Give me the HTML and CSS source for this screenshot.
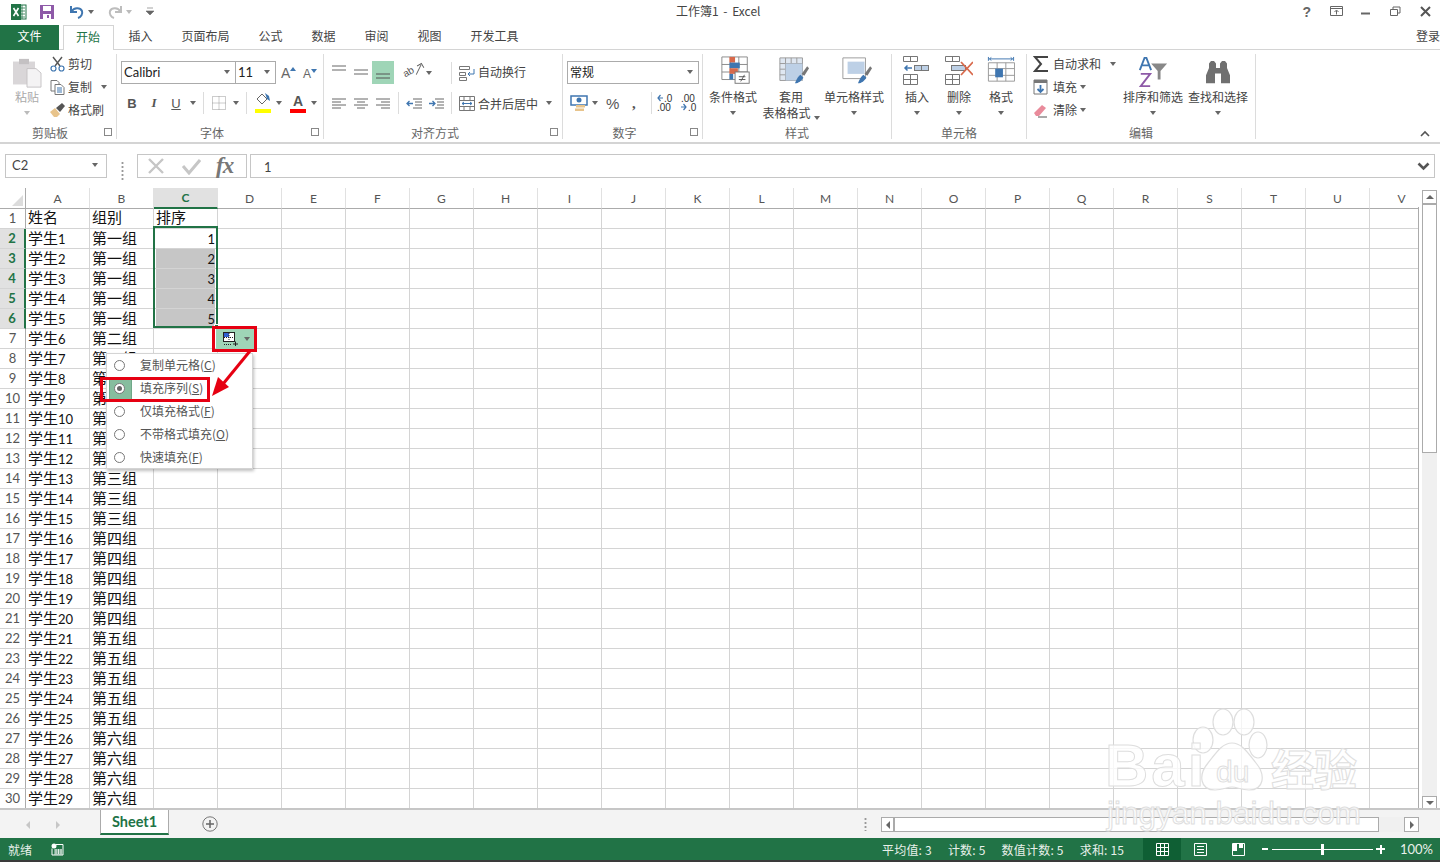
FILE: index.html
```html
<!DOCTYPE html>
<html lang="zh-CN">
<head>
    <meta charset="UTF-8">
    <title>工作簿1 - Excel</title>
    <link rel="stylesheet" href="styles.css">
</head>
<body>
<div class="app">
    <header class="titlebar">
        <div class="qat">
            <svg class="ico" width="20" height="18" viewBox="0 0 20 18"><rect x="8" y="2" width="9" height="14" fill="#fff" stroke="#217346"/><path d="M9 5h7M9 8h7M9 11h7M9 14h7M13 2v14" stroke="#217346" stroke-width=".8"/><rect x="2" y="1" width="10" height="16" fill="#217346"/><path d="M4.500 5l5 8M9.500 5l-5 8" stroke="#fff" stroke-width="1.600"/></svg>
            <svg class="ico save" width="16" height="16" viewBox="0 0 16 16"><path d="M1 1h14v14H1z" fill="#8e5aa8"/><rect x="4" y="2" width="8" height="5" fill="#fff"/><rect x="4" y="10" width="8" height="5" fill="#fff"/><rect x="8" y="11" width="2" height="3" fill="#8e5aa8"/></svg>
            <svg class="ico undo" width="16" height="16" viewBox="0 0 16 16"><path d="M2 2v6h6M2.500 7.500C5 3.500 11 3 13 7c1 3-1 6-4 7" fill="none" stroke="#3f76b0" stroke-width="2"/></svg>
            <i class="caret q"></i>
            <svg class="ico redo" width="16" height="16" viewBox="0 0 16 16"><path d="M14 2v6H8M13.500 7.500C11 3.500 5 3 3 7c-1 3 1 6 4 7" fill="none" stroke="#bdbdbd" stroke-width="2"/></svg>
            <i class="caret q light"></i>
            <svg class="ico custom" width="8" height="10" viewBox="0 0 8 10"><path d="M1 1h6M0 4h8l-4 4z" fill="#666" stroke="#666" stroke-width=".6"/></svg>
        </div>
        <div class="doc-title">工作簿1 - Excel</div>
        <div class="winbtns">
            <span class="help">?</span>
            <svg class="ribbon-opt" width="14" height="11" viewBox="0 0 14 11"><path d="M.5.500h12v9H.500zM.5 2.500h12M6.500 8.500V4.500M4.500 6l2-2 2 2" fill="none" stroke="#666"/></svg>
            <svg width="11" height="11" viewBox="0 0 11 11"><path d="M1 7.500h9" stroke="#666" stroke-width="2"/></svg>
            <svg width="11" height="11" viewBox="0 0 11 11"><path d="M3 3V1h7v6H8M.5 3.500h7v6h-7z" fill="none" stroke="#666"/></svg>
            <svg width="11" height="11" viewBox="0 0 11 11"><path d="M1 1l9 9M10 1l-9 9" stroke="#555" stroke-width="2"/></svg>
        </div>
    </header>

    <nav class="tabs">
        <a class="tab-file">文件</a>
        <a class="tab active">开始</a>
        <a class="tab">插入</a>
        <a class="tab">页面布局</a>
        <a class="tab">公式</a>
        <a class="tab">数据</a>
        <a class="tab">审阅</a>
        <a class="tab">视图</a>
        <a class="tab">开发工具</a>
        <span class="login">登录</span>
    </nav>

    <section class="ribbon">
        <div class="group g-clip">
            <div class="group-body">
                <div class="big paste">
                    <svg width="30" height="30" viewBox="0 0 30 34" preserveAspectRatio="none"><rect x="1" y="4" width="22" height="26" fill="#d9d6d8"/><rect x="7" y="1" width="10" height="6" fill="#c4c1c3"/><path d="M15 12h9l5 5v16H15z" fill="#f4f3f4" stroke="#c4c1c3"/></svg>
                    <span>粘贴</span>
                    <i class="caret light"></i>
                </div>
                <div class="stack">
                    <div class="item"><svg width="15" height="16" viewBox="0 0 15 16"><path d="M3 1l7 9M12 1l-7 9" stroke="#555" stroke-width="1.400"/><circle cx="3.500" cy="12.500" r="2.500" fill="none" stroke="#3f76b0" stroke-width="1.200"/><circle cx="11.500" cy="12.500" r="2.500" fill="none" stroke="#3f76b0" stroke-width="1.200"/></svg><span>剪切</span></div>
                    <div class="item"><svg width="15" height="15" viewBox="0 0 15 15"><path d="M1 .5h6l2 2V11H1z" fill="#fff" stroke="#777"/><path d="M5 4.500h6l3 3v7H5z" fill="#fff" stroke="#777"/><path d="M7 8h5M7 10h5M7 12h5" stroke="#3f76b0"/></svg><span>复制</span><i class="caret"></i></div>
                    <div class="item"><svg width="15" height="15" viewBox="0 0 15 15"><path d="M0 9l5-4 5 6-3 3H4z" fill="#e8c48c"/><path d="M6 5l6-5 3 3-5 6z" fill="#555"/></svg><span>格式刷</span></div>
                </div>
            </div>
            <div class="group-label with-launcher">剪贴板<i class="launcher"></i></div>
        </div>

        <div class="group g-font">
            <div class="group-body col">
                <div class="row r1">
                    <div class="combo font-name">Calibri<i class="caret"></i></div>
                    <div class="combo font-size">11<i class="caret"></i></div>
                    <span class="grow-a big-a">A<svg width="6" height="4" viewBox="0 0 6 4"><path d="M0 4l3-4 3 4z" fill="#3f76b0"/></svg></span>
                    <span class="grow-a small-a">A<svg width="6" height="4" viewBox="0 0 6 4"><path d="M0 0l3 4 3-4z" fill="#3f76b0"/></svg></span>
                </div>
                <div class="row r2">
                    <b class="fmt">B</b><em class="fmt it">I</em><u class="fmt">U</u><i class="caret"></i>
                    <i class="sep"></i>
                    <svg class="ml" width="14" height="14" viewBox="0 0 14 14"><path d="M.5.500h13v13H.500zM7 .5v13M.5 7h13" fill="none" stroke="#999" stroke-dasharray="1 1"/></svg><i class="caret"></i>
                    <i class="sep"></i>
                    <span class="color-btn"><svg width="16" height="12" viewBox="0 0 16 12"><path d="M2 6l5-5 5 5-5 5z" fill="#fff" stroke="#666"/><path d="M10 0l4 3 1 5-3-2z" fill="#3f76b0"/></svg><i class="yellow"></i></span><i class="caret"></i>
                    <span class="color-btn text-a">A<i class="red"></i></span><i class="caret"></i>
                </div>
            </div>
            <div class="group-label with-launcher">字体<i class="launcher"></i></div>
        </div>

        <div class="group g-align">
            <div class="group-body col">
                <div class="row r1">
                    <span class="al-btn"><svg width="14" height="7" viewBox="0 0 14 7"><path d="M0 1h14M0 5h14" stroke="#666"/></svg></span>
                    <span class="al-btn"><svg width="14" height="7" viewBox="0 0 14 7"><path d="M0 1h14M0 5h14" stroke="#666"/></svg></span>
                    <span class="al-btn on"><svg width="14" height="7" viewBox="0 0 14 7"><path d="M0 1h14M0 5h14" stroke="#555"/></svg></span>
                    <span class="orient">ab<svg width="12" height="9" viewBox="0 0 12 9"><path d="M1 8l9-6M6 1h5v5" fill="none" stroke="#666"/></svg></span><i class="caret"></i>
                    <i class="sep"></i>
                    <svg class="wrap-i" width="16" height="16" viewBox="0 0 16 16"><path d="M.5 1.500h10v3H.5zM.5 7.500h6v3h-6zM.5 12.500h7v3h-7z" fill="none" stroke="#777"/><path d="M15 4v5H9l2-2M9 9l2 2" fill="none" stroke="#3f76b0"/></svg><span class="al-text">自动换行</span>
                </div>
                <div class="row r2">
                    <span class="al-btn"><svg width="14" height="11" viewBox="0 0 14 11"><path d="M0 1h14M0 4h9M0 7h14M0 10h9" stroke="#666"/></svg></span>
                    <span class="al-btn"><svg width="14" height="11" viewBox="0 0 14 11"><path d="M0 1h14M3 4h8M0 7h14M3 10h8" stroke="#666"/></svg></span>
                    <span class="al-btn"><svg width="14" height="11" viewBox="0 0 14 11"><path d="M0 1h14M5 4h9M0 7h14M5 10h9" stroke="#666"/></svg></span>
                    <i class="sep s1"></i>
                    <span class="al-btn"><svg width="16" height="11" viewBox="0 0 16 11"><path d="M7 1h9M9 4h7M9 7h7M7 10h9" stroke="#666"/><path d="M7 5.500H1M3.500 3L1 5.500 3.500 8" fill="none" stroke="#3f76b0" stroke-width="1.300"/></svg></span>
                    <span class="al-btn"><svg width="16" height="11" viewBox="0 0 16 11"><path d="M7 1h9M9 4h7M9 7h7M7 10h9" stroke="#666"/><path d="M1 5.500h6M4.500 3L7 5.500 4.500 8" fill="none" stroke="#3f76b0" stroke-width="1.300"/></svg></span>
                    <i class="sep s2"></i>
                    <svg class="merge-i" width="16" height="15" viewBox="0 0 16 15"><path d="M.5.500h15v14H.500zM.5 4.500h15M.5 10.500h15M5 .5v4M11 .5v4M5 10.500v4M11 10.500v4" fill="none" stroke="#777"/><path d="M3 7.500h10M5 6L3 7.500 5 9M11 6l2 1.500L11 9" fill="none" stroke="#3f76b0"/></svg><span class="al-text">合并后居中</span><i class="caret"></i>
                </div>
            </div>
            <div class="group-label with-launcher">对齐方式<i class="launcher"></i></div>
        </div>

        <div class="group g-num">
            <div class="group-body col">
                <div class="row r1"><div class="combo num-fmt">常规<i class="caret"></i></div></div>
                <div class="row r2">
                    <svg class="cur" width="18" height="17" viewBox="0 0 18 17"><rect x="1" y="1" width="16" height="9" fill="#fff" stroke="#3f76b0" stroke-width="1.500"/><circle cx="9" cy="5" r="2.500" fill="#3f76b0"/><rect x="6" y="10" width="9" height="2.500" fill="#e8c48c"/><rect x="5" y="13.500" width="9" height="2.500" fill="#e8c48c"/></svg><i class="caret"></i>
                    <span class="pct">%</span><span class="comma">,</span>
                    <i class="sep"></i>
                    <span class="dec"><svg width="6" height="8" viewBox="0 0 6 8"><path d="M6 4H1M3.500 1L1 4l2.500 3" fill="none" stroke="#3f76b0" stroke-width="1.200"/></svg>.0<br>.00</span>
                    <span class="dec d2">.00<br><svg width="6" height="8" viewBox="0 0 6 8"><path d="M0 4h5M2.500 1L5 4 2.500 7" fill="none" stroke="#3f76b0" stroke-width="1.200"/></svg>.0</span>
                </div>
            </div>
            <div class="group-label with-launcher">数字<i class="launcher"></i></div>
        </div>

        <div class="group g-style">
            <div class="group-body">
                <div class="big b-cond">
                    <svg width="32" height="32" viewBox="0 0 32 34"><path d="M1 1h27v24H1zM10 1v24M19 1v24M1 9h27M1 17h27" fill="#fff" stroke="#888"/><rect x="9" y="1" width="6" height="6" fill="#d8694b"/><rect x="9" y="7" width="11" height="6" fill="#3f76b0"/><rect x="9" y="13" width="9" height="6" fill="#d8694b"/><rect x="9" y="19" width="4" height="6" fill="#3f76b0"/><rect x="15" y="17" width="15" height="12" fill="#fff" stroke="#777"/><path d="M19 22h7M19 25h7M25 20l-4 7" stroke="#555"/></svg>
                    <span>条件格式</span>
                    <i class="caret"></i>
                </div>
                <div class="big b-table">
                    <svg width="32" height="32" viewBox="0 0 32 34"><path d="M1 2h24v24H1zM7 2v24M13 2v24M19 2v24M1 8h24M1 14h24M1 20h24" fill="#dfe7f1" stroke="#999"/><path d="M7 8h18v18H7z" fill="#bdd0e6"/><path d="M17 29c2-5 4-8 6-9l3 3c-2 3-5 6-9 6z" fill="#3f76b0"/><path d="M24 19l6-8 2 2-5 8z" fill="#777"/></svg>
                    <span class="two">套用<br>表格格式<i class="caret inline"></i></span>
                </div>
                <div class="big b-cell">
                    <svg width="32" height="32" viewBox="0 0 32 34"><path d="M1 2h24v22H1z" fill="#fff" stroke="#999"/><rect x="6" y="6" width="18" height="13" fill="#bdd0e6"/><path d="M17 29c2-5 4-8 6-9l3 3c-2 3-5 6-9 6z" fill="#3f76b0"/><path d="M24 19l6-8 2 2-5 8z" fill="#777"/></svg>
                    <span>单元格样式</span>
                    <i class="caret"></i>
                </div>
            </div>
            <div class="group-label">样式</div>
        </div>

        <div class="group g-cells">
            <div class="group-body">
                <div class="big b-c">
                    <svg width="28" height="30" viewBox="0 0 28 30"><path d="M.5.500h14v5H.500zM7.500.5v5M.5 18.500h14v10H.500zM7.500 18.500v10M.5 23.500h14" fill="none" stroke="#777"/><rect x="11.500" y="9.500" width="14" height="5" fill="#bdd0e6" stroke="#777"/><path d="M18.500 9.500v5" stroke="#777"/><path d="M9 12H2M4.500 9.500L2 12l2.500 2.500" fill="none" stroke="#3f76b0" stroke-width="1.500"/></svg>
                    <span>插入</span>
                    <i class="caret"></i>
                </div>
                <div class="big b-c">
                    <svg width="28" height="30" viewBox="0 0 28 30"><path d="M.5.500h14v5H.500zM7.500.5v5M.5 18.500h14v10H.500zM7.500 18.500v10M.5 23.500h14" fill="none" stroke="#777"/><rect x="6.500" y="9.500" width="14" height="5" fill="#bdd0e6" stroke="#777"/><path d="M16 6l12 13M28 6L16 19" stroke="#d8694b" stroke-width="1.800"/></svg>
                    <span>删除</span>
                    <i class="caret"></i>
                </div>
                <div class="big b-c">
                    <svg width="28" height="31" viewBox="0 0 28 31"><path d="M1 1v4M27 1v4M2 3h24M2 3l2-1.500M2 3l2 1.500M26 3l-2-1.500M26 3l-2 1.500" fill="none" stroke="#3f76b0"/><path d="M1 7h27v19H1zM10 7v19M19 7v19M1 13h27M1 20h27" fill="#fff" stroke="#999"/><rect x="8" y="13" width="8" height="9" fill="#3f76b0"/></svg>
                    <span>格式</span>
                    <i class="caret"></i>
                </div>
            </div>
            <div class="group-label">单元格</div>
        </div>

        <div class="group g-edit">
            <div class="group-body">
                <div class="stack edit">
                    <div class="item"><svg width="15" height="16" viewBox="0 0 15 16"><path d="M15 1H2l6 7-6 7h13" fill="none" stroke="#444" stroke-width="2"/></svg><span>自动求和</span><i class="caret"></i></div>
                    <div class="item near"><svg width="15" height="16" viewBox="0 0 15 16"><path d="M1 1h13v14H1z" fill="#fff" stroke="#777"/><path d="M1 1h13v3H1z" fill="#777"/><path d="M7.500 6v7M4.500 10l3 3 3-3" fill="none" stroke="#3f76b0" stroke-width="1.800"/></svg><span>填充</span><i class="caret"></i></div>
                    <div class="item near"><svg width="15" height="15" viewBox="0 0 15 15"><path d="M1 10l8-8 4 3-7 8H3z" fill="#e98b9b"/><path d="M5 14h9" stroke="#555"/></svg><span>清除</span><i class="caret"></i></div>
                </div>
                <div class="big b-sort">
                    <svg width="30" height="32" viewBox="0 0 30 34"><path d="M1 15L6 2h2l5 13M3.500 10h7" fill="none" stroke="#3f76b0" stroke-width="2"/><path d="M2 19h10L2 32h10" fill="none" stroke="#8e5aa8" stroke-width="2"/><path d="M13 8h17l-7 8v9h-3v-9z" fill="#888"/></svg>
                    <span>排序和筛选</span>
                    <i class="caret"></i>
                </div>
                <div class="big b-find">
                    <svg width="26" height="25" viewBox="0 0 26 28" preserveAspectRatio="none"><path d="M1 26v-9l3-8V4l2-3h3l2 3v5h4V4l2-3h3l2 3v5l3 8v9h-9V15h-6v11z" fill="#707070"/></svg>
                    <span>查找和选择</span>
                    <i class="caret"></i>
                </div>
            </div>
            <div class="group-label">编辑</div>
        </div>

        <svg class="collapse" width="10" height="7" viewBox="0 0 10 7"><path d="M1 6l4-4 4 4" fill="none" stroke="#555" stroke-width="1.600"/></svg>
    </section>

    <section class="formula-bar">
        <div class="name-box">C2<i class="caret"></i></div>
        <div class="grip"></div>
        <div class="fx-box">
            <svg width="20" height="18" viewBox="0 0 20 18"><path d="M3 2l14 14M17 2L3 16" stroke="#c6c6c6" stroke-width="2.400"/></svg>
            <svg width="20" height="18" viewBox="0 0 20 18"><path d="M2 9l6 7L19 3" fill="none" stroke="#c6c6c6" stroke-width="3"/></svg>
            <span class="fx">fx</span>
        </div>
        <div class="formula-input"><span>1</span><svg width="13" height="9" viewBox="0 0 13 9"><path d="M1.500 1.500L6.500 6.500l5-5" fill="none" stroke="#555" stroke-width="2.600"/></svg></div>
    </section>

    <main class="sheet">
        <div class="grid-clip"><table class="grid" id="grid"></table></div>

        <div class="range"><i class="handle"></i></div>

        <div class="fill-btn">
            <svg width="16" height="14" viewBox="0 0 16 14"><rect x=".5" y=".5" width="11" height="9" fill="#fff" stroke="#222"/><rect x="1" y="1" width="5" height="4" fill="#2f5fd0"/><path d="M1 12.500h7M1 5.500h10M6 1v8" stroke="#222" stroke-dasharray="1 1"/><path d="M10 12h5M12.500 9.500v5" stroke="#222"/></svg>
            <i class="caret"></i>
        </div>
        <ul class="fill-menu">
            <li><i class="radio"></i>复制单元格(<u>C</u>)</li>
            <li class="picked"><i class="radio"></i>填充序列(<u>S</u>)</li>
            <li><i class="radio"></i>仅填充格式(<u>F</u>)</li>
            <li><i class="radio"></i>不带格式填充(<u>O</u>)</li>
            <li><i class="radio"></i>快速填充(<u>F</u>)</li>
        </ul>
        <div class="mark mark-btn"></div>
        <div class="mark mark-item"></div>
        <svg class="arrow" width="44" height="50" viewBox="0 0 44 50"><path d="M39 1L12 34" stroke="#e60012" stroke-width="3"/><path d="M1 46l6-19 11 10z" fill="#e60012"/></svg>

        <div class="vscroll">
            <span class="sb-btn"><i class="tri up"></i></span>
            <span class="sb-thumb"></span>
            <span class="sb-fill"></span>
            <span class="sb-btn"><i class="tri down"></i></span>
        </div>
    </main>

    <section class="sheet-tabs">
        <i class="nav-tri left"></i><i class="nav-tri right"></i>
        <span class="sheet-tab">Sheet1</span>
        <svg class="add-sheet" width="16" height="16" viewBox="0 0 16 16"><circle cx="8" cy="8" r="7.200" fill="none" stroke="#777"/><path d="M8 4v8M4 8h8" stroke="#666" stroke-width="1.500"/></svg>
        <span class="tab-grip"></span>
        <div class="hscroll">
            <span class="sb-btn"><i class="tri left"></i></span>
            <span class="sb-thumb"></span>
            <span class="sb-fill"></span>
            <span class="sb-btn"><i class="tri right"></i></span>
        </div>
    </section>

    <footer class="statusbar">
        <span class="ready">就绪</span>
        <svg class="macro" width="13" height="13" viewBox="0 0 13 13"><circle cx="3" cy="3" r="2.500" fill="#fff"/><path d="M5 1.500h7V12H1V5.500" fill="none" stroke="#fff"/><path d="M3 7h8M3 9h8M3 11h8M5 6v5M7.500 6v5M10 6v5" stroke="#fff" stroke-width=".8"/></svg>
        <div class="stats">
            <span>平均值: 3</span><span>计数: 5</span><span>数值计数: 5</span><span>求和: 15</span>
        </div>
        <div class="views">
            <span class="view on"><svg width="13" height="13" viewBox="0 0 13 13"><path d="M.5.500h12v12H.500zM4.500.5v12M8.500.5v12M.5 4.500h12M.5 8.500h12" fill="none" stroke="#fff"/></svg></span>
            <span class="view"><svg width="13" height="13" viewBox="0 0 13 13"><path d="M.5.500h12v12H.500zM3 3.500h7M3 6.500h7M3 9.500h7" fill="none" stroke="#fff"/></svg></span>
            <span class="view"><svg width="13" height="13" viewBox="0 0 13 13"><path d="M.5.500h12v12H.500z" fill="none" stroke="#fff"/><path d="M1 1h4v7H1zM7 1h4v4H7z" fill="#fff"/></svg></span>
        </div>
        <div class="zoom">
            <i class="minus"></i>
            <div class="slider"><i class="knob"></i></div>
            <i class="plus"></i>
            <span class="pct-zoom">100%</span>
        </div>
    </footer>

    <div class="watermark">
        <svg width="80" height="86" viewBox="0 0 80 86"><g fill="rgba(255,255,255,.75)" stroke="#dedede" stroke-width="1.200"><ellipse cx="11" cy="34" rx="10" ry="13"/><ellipse cx="31" cy="16" rx="10" ry="13"/><ellipse cx="52" cy="16" rx="10" ry="13"/><ellipse cx="66" cy="39" rx="9" ry="13"/><path d="M40 37c10 0 16 10 24 20 10 12 8 27-7 27-8 0-12-3-17-3s-9 3-17 3c-15 0-17-15-7-27 8-10 14-20 24-20z"/></g></svg>
        <span class="wm-bai">Bai</span>
        <span class="wm-du">du</span>
        <span class="wm-cn">经验</span>
        <span class="wm-url">jingyan.baidu.com</span>
    </div>
</div>
<script src="script.js"></script>
</body>
</html>
```

FILE: styles.css
```css
* {
    box-sizing: border-box;
}
html, body {
    margin: 0;
    height: 100%;
    overflow: hidden;
}
body {
    font-family: "Noto Sans CJK SC", "Liberation Sans", sans-serif;
    font-size: 12px;
    color: #444;
    background: #fff;
}
i, em {
    font-style: normal;
}
svg {
    display: block;
    flex: none;
}
.app {
    position: relative;
    width: 1440px;
    height: 862px;
    border-bottom: 2px solid #3a3a3a;
    overflow: hidden;
}
.caret {
    display: block;
    flex: none;
    width: 0;
    height: 0;
    border-left: 3.500px solid transparent;
    border-right: 3.500px solid transparent;
    border-top: 4px solid #666;
}
.caret.light {
    border-top-color: #bbb;
}

/* title bar */
.titlebar {
    height: 25px;
    display: flex;
    align-items: center;
    position: relative;
}
.qat {
    display: flex;
    align-items: center;
    padding-left: 9px;
    padding-bottom: 2px;
}
.save { margin-left: 10px; }
.undo { margin-left: 14px; }
.caret.q { margin-left: 3px; }
.redo { margin-left: 13px; }
.caret.q.light { margin-left: 3px; }
.custom { margin-left: 14px; }
.doc-title {
    position: absolute;
    left: 676px;
    top: 2px;
    line-height: 18px;
    color: #444;
    word-spacing: 2px;
}
.winbtns {
    margin-left: auto;
    display: flex;
    align-items: center;
    gap: 19px;
    padding-right: 9px;
    padding-bottom: 2px;
}
.help {
    font: bold 14px "Liberation Sans", sans-serif;
    color: #666;
}
.ribbon-opt {
    margin-right: -3px;
}

/* tabs */
.tabs {
    height: 25px;
    display: flex;
    border-bottom: 1px solid #d4d4d4;
    line-height: 21px;
    position: relative;
}
.tab-file {
    width: 59px;
    height: 25px;
    background: #217346;
    color: #fff;
    text-align: center;
    margin-right: 4px;
}
.tab {
    padding: 0 14.500px;
    color: #444;
    white-space: nowrap;
}
.tab.active {
    height: 25px;
    width: 51px;
    padding: 0 12px;
    color: #217346;
    background: #fff;
    border: 1px solid #d4d4d4;
    border-bottom: none;
}
.login {
    position: absolute;
    left: 1416px;
    top: 0;
    white-space: nowrap;
}

/* ribbon */
.ribbon {
    height: 94px;
    display: flex;
    border-bottom: 2px solid #d4d4d4;
    padding-top: 4px;
    position: relative;
}
.group {
    display: flex;
    flex-direction: column;
    height: 85px;
    border-right: 1px solid #dcdcdc;
    position: relative;
}
.group-body {
    flex: none;
    height: 70px;
    display: flex;
}
.group-body.col {
    flex-direction: column;
}
.group-label {
    height: 18px;
    line-height: 18px;
    text-align: center;
    color: #666;
}
.group-label.with-launcher {
    padding-right: 16px;
}
.launcher {
    position: absolute;
    right: 4px;
    bottom: 3px;
    width: 8px;
    height: 8px;
    border-left: 1px solid #888;
    border-top: 1px solid #888;
    box-shadow: inset -2px -2px 0 -1px #888;
}
.g-clip { width: 117px; }
.g-font { width: 207px; }
.g-align { width: 239px; }
.g-num { width: 140px; }
.g-style { width: 189px; }
.g-cells { width: 135px; }
.g-edit { width: 229px; }

.big {
    display: flex;
    flex-direction: column;
    align-items: center;
    flex: none;
    line-height: 16px;
    padding-top: 2px;
}
.big span {
    margin-top: 1px;
    white-space: nowrap;
    height: 16px;
}
.big .caret {
    margin-top: 6px;
}
.paste {
    width: 30px;
    margin-left: 12px;
    color: #aaa;
    padding-top: 4px;
}
.stack {
    display: flex;
    flex-direction: column;
    gap: 7px;
    margin-left: 8px;
    padding-top: 2px;
}
.item {
    display: flex;
    align-items: center;
    height: 16px;
    line-height: 16px;
    white-space: nowrap;
}
.item span {
    margin-left: 3px;
}
.item .caret {
    margin-left: 9px;
}

.row {
    display: flex;
    align-items: center;
}
.r1 {
    height: 23px;
    margin-top: 7px;
}
.r2 {
    height: 22px;
    margin-top: 8px;
}
.combo {
    height: 23px;
    border: 1px solid #ababab;
    background: #fff;
    display: flex;
    align-items: center;
    justify-content: space-between;
    padding: 0 5px 2px 2px;
    font-family: Lato, "Noto Sans CJK SC", sans-serif;
    font-size: 13px;
    color: #222;
}
.g-font .r1 {
    padding-left: 4px;
}
.font-name { width: 115px; }
.font-size { width: 41px; margin-left: -1px; }
.grow-a {
    display: flex;
    font-family: "Liberation Sans", sans-serif;
    color: #666;
}
.big-a {
    font-size: 14px;
    margin-left: 5px;
    width: 22px;
}
.small-a {
    font-size: 12px;
    padding-top: 2px;
    width: 14px;
}
.grow-a svg {
    margin-top: 2px;
}
.g-font .r2 {
    padding-left: 4px;
}
.fmt {
    font-family: "Liberation Sans", sans-serif;
    font-size: 13px;
    color: #555;
    width: 22px;
    text-align: center;
}
.fmt.it {
    font-style: italic;
    font-family: "Liberation Serif", serif;
    font-weight: bold;
}
.fmt + .caret {
    margin-left: 3px;
}
.sep {
    display: block;
    flex: none;
    width: 1px;
    height: 22px;
    background: #dcdcdc;
    margin: 0 7px;
}
.ml {
    margin-left: 1px;
    margin-right: 7px;
}
.color-btn {
    width: 16px;
    margin: 0 5px 0 1px;
    display: block;
    position: relative;
    height: 20px;
}
.color-btn .yellow, .color-btn .red {
    position: absolute;
    left: 0;
    bottom: 0;
    width: 16px;
    height: 4px;
    background: #ffff00;
}
.color-btn .red {
    background: #f00;
}
.text-a {
    font: bold 14px/16px "Liberation Sans", sans-serif;
    color: #555;
    text-align: center;
    margin-left: 8px;
}
.g-font .r2 > .caret:last-child {
    margin-left: 0;
}
.al-btn {
    flex: none;
    width: 22px;
    height: 23px;
    display: flex;
    align-items: flex-start;
    justify-content: center;
    padding-top: 4px;
}
.r1 .al-btn:nth-child(2) {
    padding-top: 8px;
}
.al-btn.on {
    background: #9fd5b7;
    padding-top: 12px;
}
.r2 .al-btn {
    align-items: center;
    padding-top: 0;
}
.g-align .r1, .g-align .r2 {
    padding-left: 4px;
}
.orient {
    display: flex;
    align-items: flex-start;
    width: 18px;
    height: 16px;
    margin-left: 10px;
    margin-right: 4px;
    font: 10px/10px "Liberation Sans", sans-serif;
    color: #555;
    transform: rotate(-30deg);
}
.orient svg {
    margin: 3px 0 0 -1px;
}
.g-align .r1 .sep {
    margin: 0 7px 0 19px;
}
.s1 {
    margin: 0 4px 0 4px;
}
.g-align .s2 {
    margin: 0 7px 0 4px;
}
.merge-i {
    margin-right: 3px;
}
.wrap-i {
    margin-right: 3px;
}
.al-text {
    white-space: nowrap;
}
.r1 .al-text {
    padding-bottom: 2px;
}
.g-align .r2 .caret {
    margin-left: 8px;
}
.num-fmt {
    width: 132px;
    margin-left: 4px;
    font-family: "Noto Sans CJK SC", sans-serif;
    font-size: 12px;
}
.cur {
    margin-left: 7px;
    margin-right: 4px;
}
.pct {
    margin-left: 8px;
    font-size: 15px;
    width: 14px;
    color: #555;
    font-family: "Liberation Sans", sans-serif;
}
.comma {
    margin-left: 12px;
    font: bold 15px/12px "Liberation Serif", serif;
    color: #555;
    width: 5px;
}
.g-num .sep {
    margin: 0 5px 0 14px;
}
.dec {
    font: 10px/9px "Liberation Sans", sans-serif;
    color: #333;
    width: 20px;
    white-space: nowrap;
}
.dec svg {
    display: inline-block;
    margin-right: 1px;
}
.d2 {
    margin-left: 4px;
}
.b-cond svg, .b-table svg, .b-cell svg {
    margin-left: 5px;
}
.b-cond { width: 60px; }
.b-table { width: 68px; margin-left: -6px; }
.b-table span.two {
    text-align: center;
    line-height: 16px;
    height: 32px;
}
.caret.inline {
    display: inline-block;
    margin-left: 3px;
    vertical-align: middle;
}
.b-cell { width: 60px; margin-left: -1px; }
.b-c { width: 42px; }
.b-c svg { height: 30px; margin-bottom: 2px; }
.g-cells .group-body { padding-left: 4px; }
.g-edit .stack.edit {
    width: 90px;
    margin-left: 6px;
}
.edit .item span {
    margin-left: 5px;
}
.item.near .caret {
    margin-left: 3px;
}
.b-sort { width: 60px; }
.b-find { width: 62px; margin-left: 4px; }
.b-find svg { margin: 4px 0 3px; }
.collapse {
    position: absolute;
    right: 10px;
    bottom: 5px;
}

/* formula bar */
.formula-bar {
    height: 44px;
    display: flex;
    padding-top: 10px;
    background: #fff;
}
.name-box {
    width: 102px;
    height: 24px;
    margin-left: 5px;
    border: 1px solid #c6c6c6;
    padding: 0 8px 2px 6px;
    display: flex;
    align-items: center;
    justify-content: space-between;
    font-family: Lato, sans-serif;
    font-size: 13px;
}
.grip {
    width: 30px;
    margin: 7px 0;
    background: radial-gradient(circle, #999 1px, transparent 1.200px) center top / 3px 4px repeat-y;
}
.fx-box {
    width: 110px;
    height: 24px;
    border: 1px solid #c6c6c6;
    display: flex;
    align-items: center;
    gap: 15px;
    padding-left: 8px;
}
.fx {
    font: italic bold 23px/20px "Liberation Serif", serif;
    color: #777;
    letter-spacing: -1px;
    margin-left: 0;
}
.formula-input {
    flex: 1;
    height: 24px;
    margin-left: 3px;
    margin-right: 5px;
    border: 1px solid #c6c6c6;
    display: flex;
    align-items: center;
    justify-content: space-between;
    padding: 0 4px 0 13px;
    font-family: Lato, sans-serif;
    font-size: 13px;
}
.formula-input span {
    padding-top: 2px;
}

/* sheet */
.sheet {
    position: relative;
    height: 622px;
    border-bottom: 2px solid #c6c6c6;
    overflow: hidden;
}
.sheet::after {
    content: "";
    position: absolute;
    left: 1418px;
    top: 19px;
    bottom: 0;
    width: 1px;
    background: #ababab;
}
.grid-clip {
    width: 1418px;
    height: 620px;
    overflow: hidden;
}
.grid {
    border-collapse: separate;
    border-spacing: 0;
    table-layout: fixed;
    width: 1434px;
    font-family: Lato, "Noto Sans CJK SC", sans-serif;
    font-size: 15px;
    color: #111;
    background: #fff;
}
.grid td, .grid th {
    padding: 0;
    height: 20px;
    border-right: 1px solid #d4d4d4;
    border-bottom: 1px solid #d4d4d4;
    overflow: hidden;
    white-space: nowrap;
    font-weight: normal;
}
.grid td {
    padding: 1px 2px 1px;
    line-height: 17px;
}
.grid .n {
    font-size: 13px;
    line-height: 0;
}
.grid tbody tr:first-child td {
    padding-top: 0;
    padding-bottom: 2px;
}
.grid col.head { width: 26px; }
.grid col.c { width: 64px; }
.grid thead th {
    height: 20px;
    font-size: 12px;
    color: #555;
    background: #fff;
    border-bottom: 1px solid #ababab;
    border-right: 1px solid #e1e1e1;
    line-height: 19px;
}
.grid tbody th {
    font-size: 13px;
    line-height: 17px;
    padding: 1px 0;
    color: #555;
    background: #fff;
    border-right: 1px solid #ababab;
    text-align: center;
}
.grid thead th.corner {
    position: relative;
    border-right: 1px solid #ababab;
}
.grid thead th.corner::after {
    content: "";
    position: absolute;
    right: 2px;
    bottom: 2px;
    border-left: 11px solid transparent;
    border-bottom: 11px solid #dcdcdc;
}
.grid thead th.sel {
    background: #e1e1e1;
    color: #217346;
    font-weight: bold;
    border-bottom: 2px solid #217346;
}
.grid tbody th.sel {
    background: #e1e1e1;
    color: #217346;
    font-weight: bold;
    border-right: 2px solid #217346;
}
.grid td.num {
    text-align: right;
    padding-right: 2px;
}
.grid td.shade {
    background: #c6c6c6;
    border-bottom-color: #d4d4d4;
    box-shadow: inset 2px 0 0 #fff, inset -2px 0 0 #fff;
}
.range {
    position: absolute;
    left: 153px;
    top: 38px;
    width: 65px;
    height: 102px;
    border: 2px solid #217346;
    pointer-events: none;
}
.handle {
    position: absolute;
    right: -3px;
    bottom: -3px;
    width: 5px;
    height: 5px;
    background: #217346;
    border: 1px solid #fff;
}
.fill-btn {
    position: absolute;
    left: 216px;
    top: 141px;
    width: 38px;
    height: 20px;
    background: #9fd5b7;
    display: flex;
    align-items: center;
    gap: 5px;
    padding-left: 7px;
}
.fill-menu {
    position: absolute;
    left: 106px;
    top: 165px;
    width: 147px;
    height: 116px;
    margin: 0;
    padding: 0;
    list-style: none;
    background: #fff;
    border: 1px solid #d4d4d4;
    box-shadow: 1px 2px 3px rgba(0, 0, 0, .25);
}
.fill-menu li {
    height: 23px;
    line-height: 21px;
    display: flex;
    align-items: center;
    padding: 0 0 2px 33px;
    position: relative;
    white-space: pre;
    color: #555;
}
.fill-menu li u {
    text-underline-offset: 1px;
}
.radio {
    position: absolute;
    left: 7px;
    top: 6px;
    width: 11px;
    height: 11px;
    border-radius: 50%;
    border: 1px solid #777;
    background: #fff;
}
.picked::before {
    content: "";
    position: absolute;
    left: 2px;
    top: 1px;
    width: 21px;
    height: 21px;
    background: #86bd9e;
    border: 1px solid #6fa888;
}
.picked .radio::after {
    content: "";
    position: absolute;
    left: 2px;
    top: 2px;
    width: 5px;
    height: 5px;
    border-radius: 50%;
    background: #666;
}
.mark {
    position: absolute;
    border: 3px solid #e60012;
    pointer-events: none;
}
.mark-btn {
    left: 212px;
    top: 138px;
    width: 45px;
    height: 26px;
}
.mark-item {
    left: 100px;
    top: 189px;
    width: 110px;
    height: 25px;
}
.arrow {
    position: absolute;
    left: 211px;
    top: 162px;
}

/* scrollbars */
.sb-btn {
    flex: none;
    background: #fff;
    border: 1px solid #ababab;
    display: flex;
    align-items: center;
    justify-content: center;
}
.sb-thumb {
    flex: none;
    background: #fff;
    border: 1px solid #ababab;
}
.sb-fill {
    flex: 1;
    background: #f0f0f0;
}
.tri {
    width: 0;
    height: 0;
    display: block;
    border: 4px solid transparent;
}
.tri.up { border-bottom-color: #666; border-top-width: 0; }
.tri.down { border-top-color: #666; border-bottom-width: 0; }
.tri.left { border-right-color: #666; border-left-width: 0; }
.tri.right { border-left-color: #666; border-right-width: 0; }
.vscroll {
    position: absolute;
    left: 1422px;
    top: 2px;
    width: 15px;
    height: 620px;
    display: flex;
    flex-direction: column;
}
.vscroll .sb-btn { height: 14px; }
.vscroll .sb-thumb { height: 249px; }

/* sheet tabs */
.sheet-tabs {
    height: 28px;
    background: #f3f3f3;
    display: flex;
    align-items: center;
    position: relative;
}
.nav-tri {
    display: block;
    position: absolute;
    top: 11px;
    width: 0;
    height: 0;
    border: 4px solid transparent;
}
.nav-tri.left { left: 26px; border-right-color: #c6c6c6; border-left-width: 0; }
.nav-tri.right { left: 56px; border-left-color: #c6c6c6; border-right-width: 0; }
.sheet-tab {
    margin-left: 100px;
    width: 69px;
    height: 25px;
    background: #fff;
    border: 1px solid #ababab;
    border-top: none;
    border-bottom: 2px solid #217346;
    color: #217346;
    font: bold 14.500px/23px Lato, sans-serif;
    text-align: center;
    align-self: flex-start;
}
.add-sheet {
    margin-left: 33px;
}
.tab-grip {
    width: 4px;
    height: 14px;
    margin-left: 645px;
    background: radial-gradient(circle, #999 1px, transparent 1.200px) center top / 3px 4px repeat-y;
}
.hscroll {
    position: absolute;
    left: 881px;
    top: 7px;
    width: 538px;
    height: 15px;
    display: flex;
}
.hscroll .sb-btn { width: 13px; }
.hscroll .sb-thumb { width: 485px; }
.hscroll .sb-btn:last-child { width: 15px; }

/* status bar */
.statusbar {
    height: 22px;
    background: #217346;
    color: #e8f0ea;
    display: flex;
    align-items: center;
    position: relative;
}
.ready {
    margin-left: 8px;
}
.macro {
    margin-left: 19px;
}
.stats {
    margin-left: 818px;
    display: flex;
    gap: 16px;
    white-space: nowrap;
    letter-spacing: .2px;
}
.views {
    position: absolute;
    left: 1143px;
    top: 0;
    height: 22px;
    display: flex;
}
.view {
    width: 38px;
    height: 22px;
    display: flex;
    align-items: center;
    justify-content: center;
}
.view.on {
    background: #0f5f34;
}
.zoom {
    position: absolute;
    left: 1262px;
    top: 0;
    height: 22px;
    display: flex;
    align-items: center;
}
.minus {
    width: 6px;
    height: 2px;
    background: #fff;
}
.slider {
    width: 101px;
    height: 1px;
    background: #fff;
    margin-left: 4px;
    position: relative;
}
.knob {
    position: absolute;
    left: 49px;
    top: -5px;
    width: 3px;
    height: 11px;
    background: #fff;
}
.plus {
    display: block;
    width: 9px;
    height: 9px;
    margin-left: 3px;
    background: linear-gradient(#fff, #fff) center / 9px 2px no-repeat, linear-gradient(#fff, #fff) center / 2px 9px no-repeat;
}
.pct-zoom {
    margin-left: 15px;
    font-family: Lato, sans-serif;
    font-size: 13px;
}

/* watermark, sits on top of the sheet */
.watermark {
    position: absolute;
    left: 1100px;
    top: 700px;
    width: 290px;
    height: 140px;
    pointer-events: none;
}
.watermark svg {
    position: absolute;
    left: 92px;
    top: 6px;
}
.watermark span {
    position: absolute;
    color: rgba(255, 255, 255, .8);
    -webkit-text-stroke: 1px #dedede;
    font-family: "Liberation Sans", sans-serif;
    white-space: nowrap;
    font-weight: bold;
}
.watermark .wm-bai {
    left: 5px;
    top: 31px;
    font-size: 60px;
    line-height: 70px;
    letter-spacing: 3px;
}
.watermark .wm-du {
    left: 116px;
    top: 55px;
    font-size: 30px;
    line-height: 34px;
    font-weight: normal;
}
.watermark .wm-cn {
    left: 171px;
    top: 37px;
    font-size: 43px;
    line-height: 60px;
    font-family: "Noto Sans CJK SC", sans-serif;
}
.watermark .wm-url {
    left: 7px;
    top: 94px;
    font-size: 31.500px;
    line-height: 38px;
    font-weight: normal;
}
```

FILE: script.js
```js
// builds the sheet grid, columns A to V
const COLS = 'ABCDEFGHIJKLMNOPQRSTUV'.split('');
const GROUP_NAMES = ['第一组', '第二组', '第三组', '第四组', '第五组', '第六组'];

function num(n) {
    return `<span class="n">${n}</span>`;
}

function buildGrid() {
    let html = '<colgroup><col class="head">';
    COLS.forEach(() => { html += '<col class="c">'; });
    html += '</colgroup><thead><tr><th class="corner"></th>';
    COLS.forEach((c) => {
        html += `<th class="${c === 'C' ? 'sel' : ''}">${c}</th>`;
    });
    html += '</tr></thead><tbody>';

    for (let r = 1; r <= 31; r++) {
        const selected = r >= 2 && r <= 6;
        html += `<tr><th class="${selected ? 'sel' : ''}">${r < 31 ? r : ''}</th>`;
        let a = '', b = '', c = '';
        if (r === 1) {
            a = '姓名'; b = '组别'; c = '排序';
        } else if (r < 31) {
            a = '学生' + num(r - 1);
            b = GROUP_NAMES[Math.floor((r - 2) / 5)];
            if (r <= 6) c = num(r - 1);
        }
        html += `<td>${a}</td><td>${b}</td>`;
        const cls = r === 2 ? 'num' : selected ? 'num shade' : '';
        html += `<td class="${cls}">${c}</td>`;
        html += '<td></td>'.repeat(COLS.length - 3);
        html += '</tr>';
    }
    document.getElementById('grid').innerHTML = html + '</tbody>';
}

buildGrid();
```
